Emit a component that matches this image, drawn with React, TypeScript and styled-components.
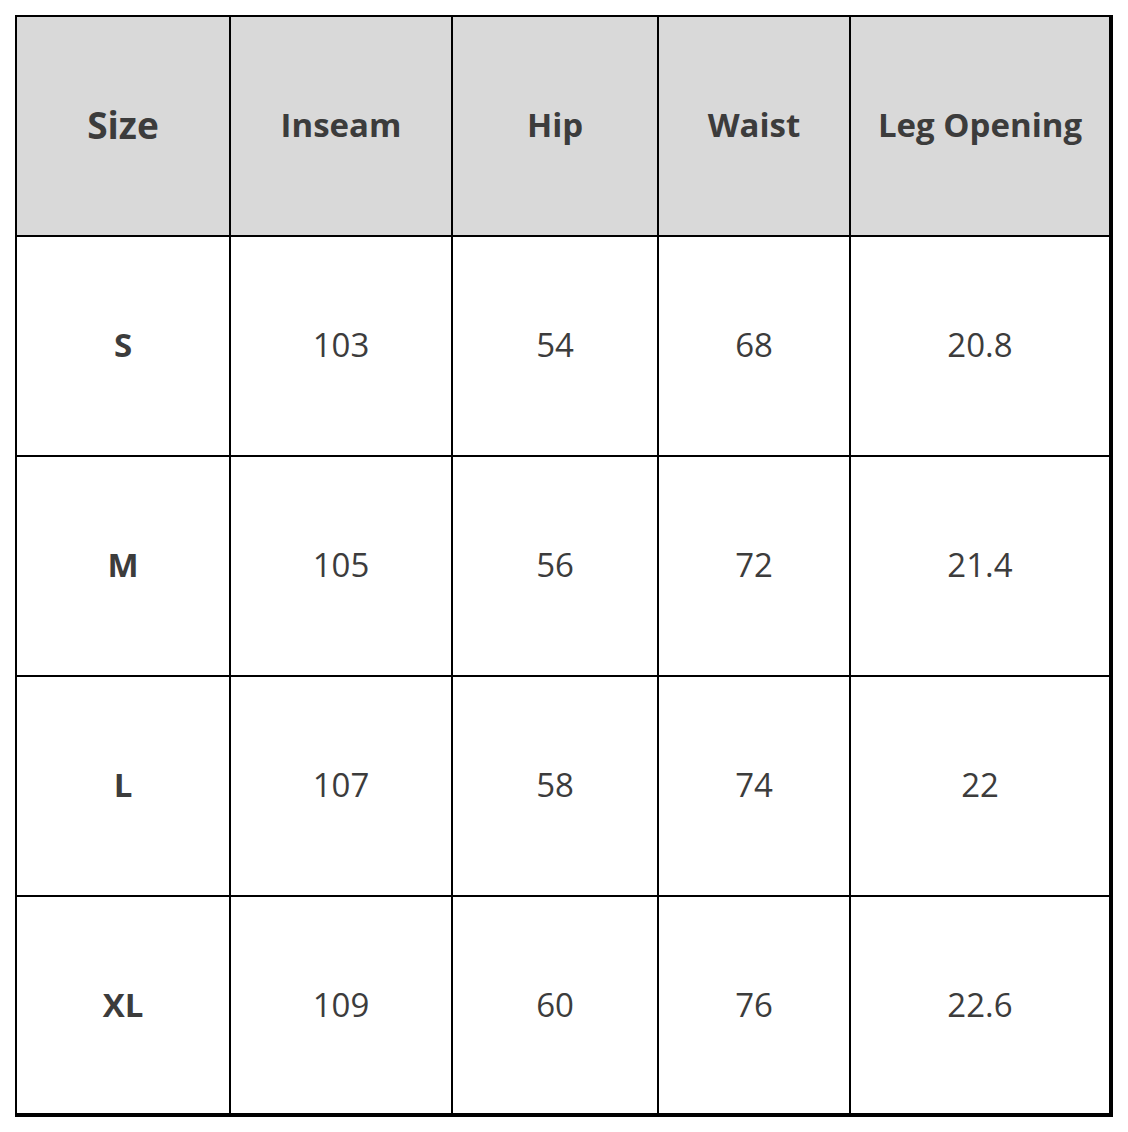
import styled, { createGlobalStyle } from 'styled-components';

const GlobalStyle = createGlobalStyle`
  html, body {
    margin: 0;
    padding: 0;
    background: #ffffff;
  }
  body {
    font-family: "Open Sans", "Noto Sans", "Liberation Sans", sans-serif;
  }
`;

const columns = [214, 222, 206, 192, 262];

const rows = [
  ['S', '103', '54', '68', '20.8'],
  ['M', '105', '56', '72', '21.4'],
  ['L', '107', '58', '74', '22'],
  ['XL', '109', '60', '76', '22.6'],
];

const headers = ['Size', 'Inseam', 'Hip', 'Waist', 'Leg Opening'];

const Grid = styled.div`
  display: grid;
  grid-template-columns: ${columns.map((c) => `${c}px`).join(' ')};
  grid-auto-rows: 220px;
  width: max-content;
  margin: 15px 0 0 15px;
  border-left: 2px solid #000;
  border-top: 2px solid #000;
`;

const Cell = styled.div<{ $head?: boolean; $bold?: boolean; $lastCol?: boolean; $lastRow?: boolean; $big?: boolean }>`
  box-sizing: border-box;
  display: flex;
  align-items: center;
  justify-content: center;
  padding-bottom: ${(p) => (p.$lastRow ? 1 : 4)}px;
  border-right: ${(p) => (p.$lastCol ? 4 : 2)}px solid #000;
  border-bottom: ${(p) => (p.$lastRow ? 4 : 2)}px solid #000;
  background: ${(p) => (p.$head ? '#d9d9d9' : '#ffffff')};
  color: #3c3c3c;
  font-size: ${(p) => (p.$big ? 37 : 33)}px;
  font-weight: ${(p) => (p.$bold ? 700 : 400)};
  white-space: nowrap;
`;

export default function App() {
  return (
    <>
      <GlobalStyle />
      <Grid>
        {headers.map((h, i) => (
          <Cell key={h} $head $bold $big={i === 0} $lastCol={i === headers.length - 1}>
            {h}
          </Cell>
        ))}
        {rows.map((r, ri) =>
          r.map((v, ci) => (
            <Cell
              key={`${ri}-${ci}`}
              $bold={ci === 0}
              $lastCol={ci === r.length - 1}
              $lastRow={ri === rows.length - 1}
            >
              {v}
            </Cell>
          ))
        )}
      </Grid>
    </>
  );
}
